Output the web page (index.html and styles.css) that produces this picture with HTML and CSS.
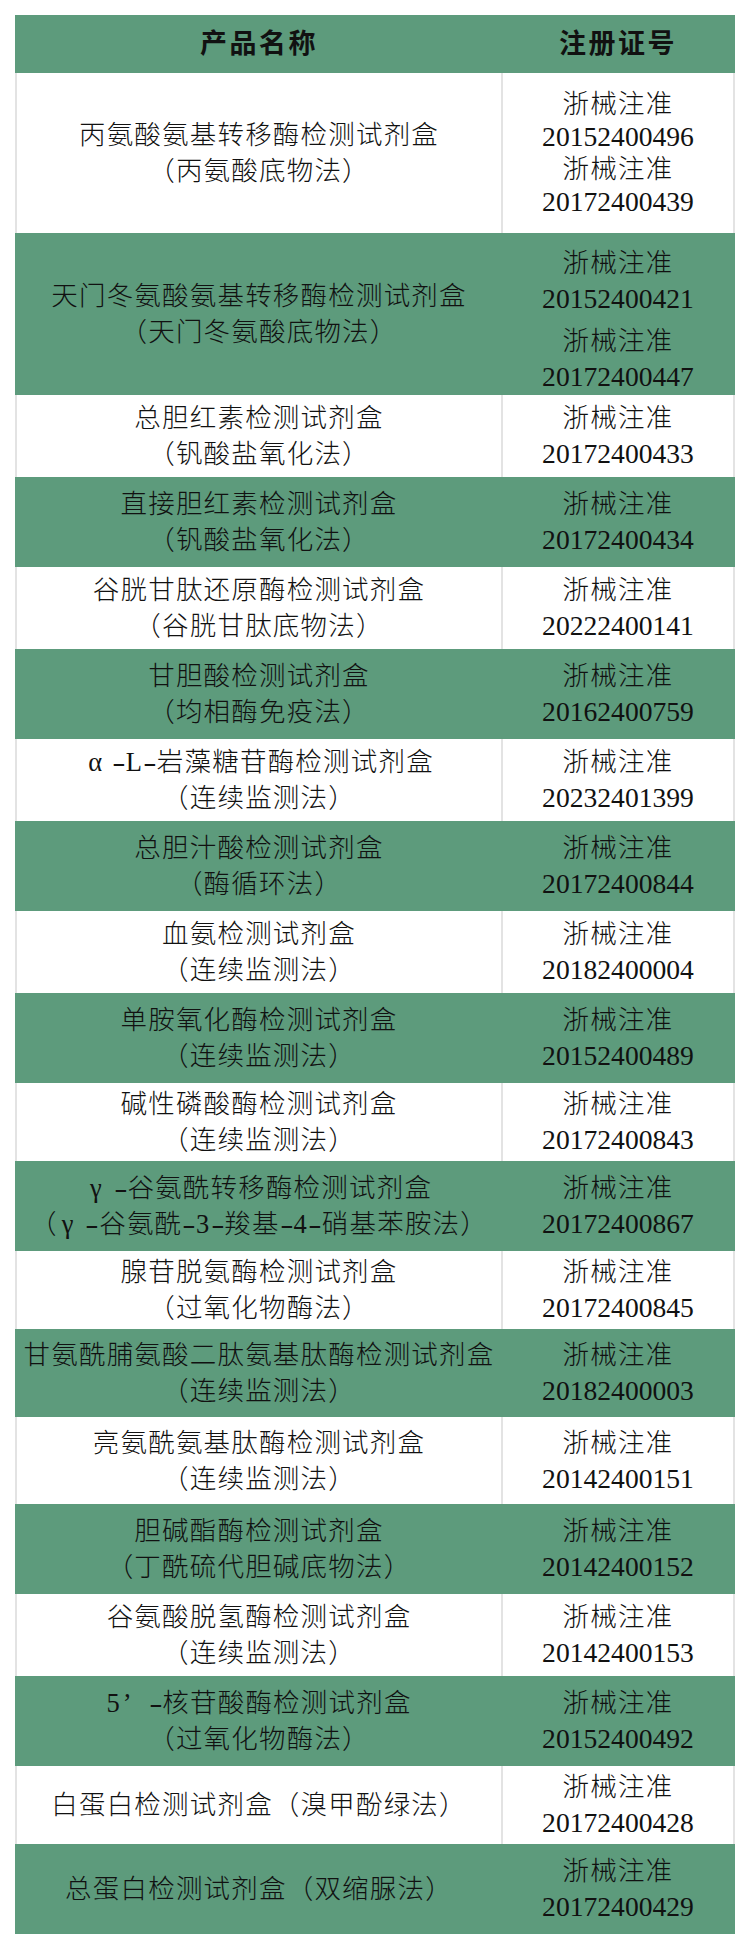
FILE: index.html
```html
<!DOCTYPE html>
<html lang="zh-CN">
<head>
<meta charset="utf-8">
<title>产品注册证号</title>
<link rel="stylesheet" href="styles.css">
</head>
<body>
<table class="reg-table">
  <thead>
    <tr>
      <th class="col-name">产品名称</th>
      <th class="col-reg">注册证号</th>
    </tr>
  </thead>
  <tbody>
    <tr class="w h160">
      <td class="name">丙氨酸氨基转移酶检测试剂盒<br>（丙氨酸底物法）</td>
      <td class="reg dense">浙械注准<br><span class="num">20152400496</span><br>浙械注准<br><span class="num">20172400439</span></td>
    </tr>
    <tr class="g h162">
      <td class="name">天门冬氨酸氨基转移酶检测试剂盒<br>（天门冬氨酸底物法）</td>
      <td class="reg"><div class="reg-item first">浙械注准<br><span class="num">20152400421</span></div><div class="reg-item next">浙械注准<br><span class="num">20172400447</span></div></td>
    </tr>
    <tr class="w">
      <td class="name">总胆红素检测试剂盒<br>（钒酸盐氧化法）</td>
      <td class="reg">浙械注准<br><span class="num">20172400433</span></td>
    </tr>
    <tr class="g">
      <td class="name">直接胆红素检测试剂盒<br>（钒酸盐氧化法）</td>
      <td class="reg">浙械注准<br><span class="num">20172400434</span></td>
    </tr>
    <tr class="w">
      <td class="name">谷胱甘肽还原酶检测试剂盒<br>（谷胱甘肽底物法）</td>
      <td class="reg">浙械注准<br><span class="num">20222400141</span></td>
    </tr>
    <tr class="g">
      <td class="name">甘胆酸检测试剂盒<br>（均相酶免疫法）</td>
      <td class="reg">浙械注准<br><span class="num">20162400759</span></td>
    </tr>
    <tr class="w">
      <td class="name"><span class="fw">α</span><span class="hy">-</span>L<span class="hy">-</span>岩藻糖苷酶检测试剂盒<br>（连续监测法）</td>
      <td class="reg">浙械注准<br><span class="num">20232401399</span></td>
    </tr>
    <tr class="g">
      <td class="name">总胆汁酸检测试剂盒<br>（酶循环法）</td>
      <td class="reg">浙械注准<br><span class="num">20172400844</span></td>
    </tr>
    <tr class="w">
      <td class="name">血氨检测试剂盒<br>（连续监测法）</td>
      <td class="reg">浙械注准<br><span class="num">20182400004</span></td>
    </tr>
    <tr class="g">
      <td class="name">单胺氧化酶检测试剂盒<br>（连续监测法）</td>
      <td class="reg">浙械注准<br><span class="num">20152400489</span></td>
    </tr>
    <tr class="w sm">
      <td class="name">碱性磷酸酶检测试剂盒<br>（连续监测法）</td>
      <td class="reg">浙械注准<br><span class="num">20172400843</span></td>
    </tr>
    <tr class="g">
      <td class="name"><span class="fw">γ</span><span class="hy">-</span>谷氨酰转移酶检测试剂盒<br>（<span class="fw">γ</span><span class="hy">-</span>谷氨酰<span class="hy">-</span>3<span class="hy">-</span>羧基<span class="hy">-</span>4<span class="hy">-</span>硝基苯胺法）</td>
      <td class="reg">浙械注准<br><span class="num">20172400867</span></td>
    </tr>
    <tr class="w sm">
      <td class="name">腺苷脱氨酶检测试剂盒<br>（过氧化物酶法）</td>
      <td class="reg">浙械注准<br><span class="num">20172400845</span></td>
    </tr>
    <tr class="g sm">
      <td class="name">甘氨酰脯氨酸二肽氨基肽酶检测试剂盒<br>（连续监测法）</td>
      <td class="reg">浙械注准<br><span class="num">20182400003</span></td>
    </tr>
    <tr class="w lg">
      <td class="name">亮氨酰氨基肽酶检测试剂盒<br>（连续监测法）</td>
      <td class="reg">浙械注准<br><span class="num">20142400151</span></td>
    </tr>
    <tr class="g">
      <td class="name">胆碱酯酶检测试剂盒<br>（丁酰硫代胆碱底物法）</td>
      <td class="reg">浙械注准<br><span class="num">20142400152</span></td>
    </tr>
    <tr class="w">
      <td class="name">谷氨酸脱氢酶检测试剂盒<br>（连续监测法）</td>
      <td class="reg">浙械注准<br><span class="num">20142400153</span></td>
    </tr>
    <tr class="g">
      <td class="name">5<span class="fw q">’</span><span class="hy">-</span>核苷酸酶检测试剂盒<br>（过氧化物酶法）</td>
      <td class="reg">浙械注准<br><span class="num">20152400492</span></td>
    </tr>
    <tr class="w sm">
      <td class="name">白蛋白检测试剂盒（溴甲酚绿法）</td>
      <td class="reg">浙械注准<br><span class="num">20172400428</span></td>
    </tr>
    <tr class="g">
      <td class="name">总蛋白检测试剂盒（双缩脲法）</td>
      <td class="reg">浙械注准<br><span class="num">20172400429</span></td>
    </tr>
  </tbody>
</table>
</body>
</html>
```

FILE: styles.css
```css
body {
  margin: 0;
  background: #ffffff;
  color: #111111;
  font-family: "Liberation Serif", "Noto Sans CJK SC", serif;
}

.reg-table {
  margin: 15px 0 0 15px;
  width: 720px;
  table-layout: fixed;
  border-collapse: separate;
  border-spacing: 0;
}

.reg-table th,
.reg-table td {
  padding: 0;
  text-align: center;
  vertical-align: middle;
}

.reg-table th {
  height: 58px;
  background: #5d9b7c;
  font-size: 27px;
  font-weight: 700;
  letter-spacing: 2.5px;
  line-height: 36px;
}

.col-name {
  width: 486px;
  box-sizing: border-box;
  border-left: 2px solid transparent;
}

.col-reg {
  width: 234px;
  box-sizing: border-box;
  border-left: 2px solid #5d9b7c;
  border-right: 2px solid #5d9b7c;
}

.reg-table td {
  font-size: 26.5px;
  font-weight: 300;
  letter-spacing: 1.2px;
  line-height: 36px;
}

.name {
  border-left: 2px solid transparent;
}

.reg {
  border-left: 2px solid transparent;
  border-right: 2px solid transparent;
}

/* white rows */
.w td { height: 82px; }
.w .name { border-left-color: #e3e3e3; }
.w .reg { border-left-color: #e3e3e3; border-right-color: #e3e3e3; }

/* green rows */
.g td { height: 90px; background: #5d9b7c; }
.g .reg { border-left-color: #5d9b7c; border-right-color: #5d9b7c; }

.w.sm td { height: 78px; }
.w.lg td { height: 87px; }
.g.sm td { height: 88px; }
.h160 td { height: 160px; }
.h162 td { height: 162px; }

.reg-table td.dense { line-height: 32.5px; }

.reg-item.first { margin-top: 12px; }
.reg-item.next { margin-top: 6px; }

.num {
  font-size: 27.6px;
  letter-spacing: 0;
}

.fw {
  display: inline-block;
  width: 27.7px;
  box-sizing: border-box;
  padding-left: 4px;
  text-align: left;
  letter-spacing: 0;
}

.fw.q { padding-left: 2px; }

.hy {
  display: inline-block;
  width: 13.8px;
  text-align: center;
  letter-spacing: 0;
  transform: scaleX(1.5);
}
```
